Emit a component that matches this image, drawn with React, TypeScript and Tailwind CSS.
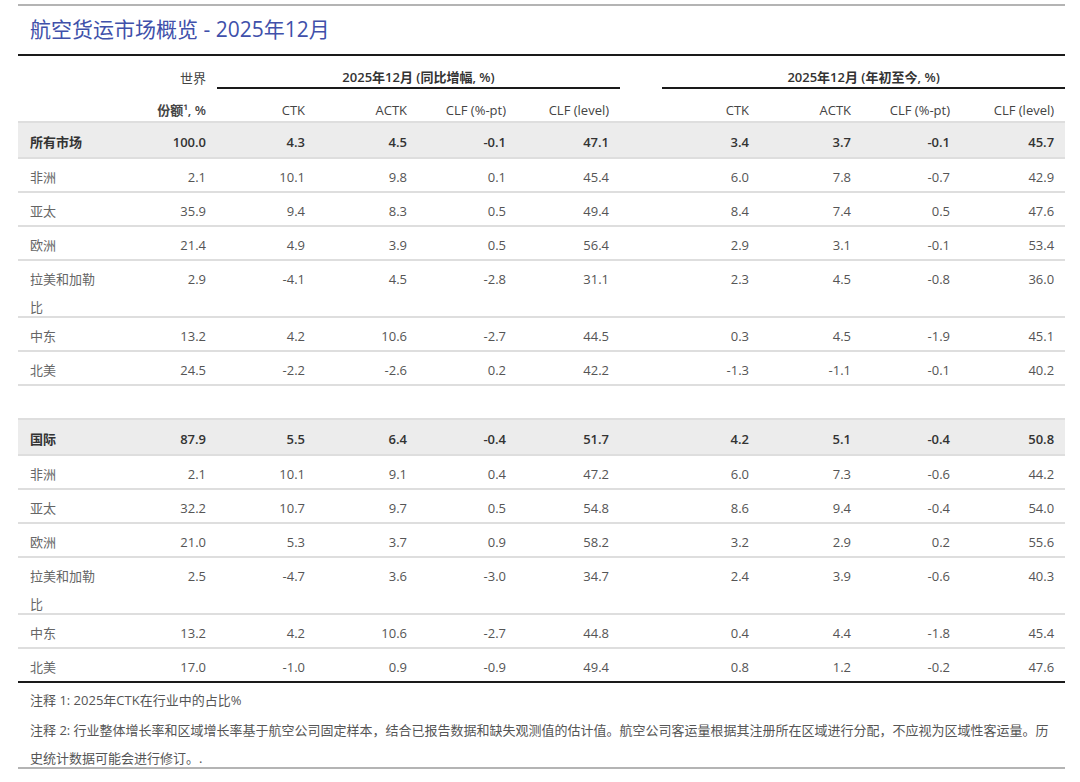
import React from "react";

type Row = {
  label: string;
  share: string;
  ytd: string[];
  cum: string[];
  bold?: boolean;
  tall?: boolean;
  last?: boolean;
};

const allMarkets: Row[] = [
  { label: "所有市场", share: "100.0", ytd: ["4.3", "4.5", "-0.1", "47.1"], cum: ["3.4", "3.7", "-0.1", "45.7"], bold: true },
  { label: "非洲", share: "2.1", ytd: ["10.1", "9.8", "0.1", "45.4"], cum: ["6.0", "7.8", "-0.7", "42.9"] },
  { label: "亚太", share: "35.9", ytd: ["9.4", "8.3", "0.5", "49.4"], cum: ["8.4", "7.4", "0.5", "47.6"] },
  { label: "欧洲", share: "21.4", ytd: ["4.9", "3.9", "0.5", "56.4"], cum: ["2.9", "3.1", "-0.1", "53.4"] },
  { label: "拉美和加勒比", share: "2.9", ytd: ["-4.1", "4.5", "-2.8", "31.1"], cum: ["2.3", "4.5", "-0.8", "36.0"], tall: true },
  { label: "中东", share: "13.2", ytd: ["4.2", "10.6", "-2.7", "44.5"], cum: ["0.3", "4.5", "-1.9", "45.1"] },
  { label: "北美", share: "24.5", ytd: ["-2.2", "-2.6", "0.2", "42.2"], cum: ["-1.3", "-1.1", "-0.1", "40.2"] },
];

const international: Row[] = [
  { label: "国际", share: "87.9", ytd: ["5.5", "6.4", "-0.4", "51.7"], cum: ["4.2", "5.1", "-0.4", "50.8"], bold: true },
  { label: "非洲", share: "2.1", ytd: ["10.1", "9.1", "0.4", "47.2"], cum: ["6.0", "7.3", "-0.6", "44.2"] },
  { label: "亚太", share: "32.2", ytd: ["10.7", "9.7", "0.5", "54.8"], cum: ["8.6", "9.4", "-0.4", "54.0"] },
  { label: "欧洲", share: "21.0", ytd: ["5.3", "3.7", "0.9", "58.2"], cum: ["3.2", "2.9", "0.2", "55.6"] },
  { label: "拉美和加勒比", share: "2.5", ytd: ["-4.7", "3.6", "-3.0", "34.7"], cum: ["2.4", "3.9", "-0.6", "40.3"], tall: true },
  { label: "中东", share: "13.2", ytd: ["4.2", "10.6", "-2.7", "44.8"], cum: ["0.4", "4.4", "-1.8", "45.4"] },
  { label: "北美", share: "17.0", ytd: ["-1.0", "0.9", "-0.9", "49.4"], cum: ["0.8", "1.2", "-0.2", "47.6"], last: true },
];

function DataRow({ row }: { row: Row }) {
  const base = row.last ? "" : "border-b-2 border-[#dedede]";
  const bg = row.bold ? "bg-[#ececec]" : "";
  const pad = row.bold ? "pt-[5px] pb-px" : "pt-[4px]";
  const tone = row.bold ? "font-semibold text-[#333]" : "text-[#555]";
  const cell = `${base} ${bg} ${pad} align-top leading-[28px]`;
  const num = `${cell} ${tone} text-right pr-[11px]`;
  return (
    <tr>
      <td className={`${cell} pl-[12px] ${row.bold ? "font-semibold text-[#333]" : "text-[#666]"}`}>
        <div className={row.tall ? "h-[51px]" : row.last ? "h-[28px]" : ""}>{row.label}</div>
      </td>
      <td className={num}>{row.share}</td>
      {row.ytd.map((v, i) => (
        <td key={"y" + i} className={num}>{v}</td>
      ))}
      <td className={cell}></td>
      {row.cum.map((v, i) => (
        <td key={"c" + i} className={num}>{v}</td>
      ))}
    </tr>
  );
}

const subHeads = ["CTK", "ACTK", "CLF (%-pt)", "CLF (level)"];

export default function App() {
  return (
    <div className="min-h-[782px] w-[1080px] bg-white pt-[4px] font-['Open_Sans','Noto_Sans_CJK_SC',sans-serif] text-[13px]">
      <div className="ml-[18px] w-[1047px]">
        <div className="h-[2px] bg-[#b4b4b4]" />
        <div className="flex h-[48px] items-center pl-[12px] text-[21px] text-[#4050aa]">
          航空货运市场概览 - 2025年12月
        </div>
        <div className="h-[2px] bg-[#1a1a1a]" />

        <table className="w-full table-fixed border-separate border-spacing-0">
          <colgroup>
            <col className="w-[87px]" />
            <col className="w-[112px]" />
            <col className="w-[99px]" />
            <col className="w-[102px]" />
            <col className="w-[99px]" />
            <col className="w-[103px]" />
            <col className="w-[42px]" />
            <col className="w-[98px]" />
            <col className="w-[102px]" />
            <col className="w-[99px]" />
            <col className="w-[104px]" />
          </colgroup>
          <thead>
            <tr>
              <th className="h-[33px]"></th>
              <th className="h-[33px] align-bottom pb-px pr-[11px] text-right font-normal leading-[20px] text-[#444]">世界</th>
              <th colSpan={4} className="h-[33px] align-bottom border-b-2 border-[#1a1a1a] text-center font-semibold leading-[20px] text-[#333]">
                2025年12月 (同比增幅, %)
              </th>
              <th></th>
              <th colSpan={4} className="h-[33px] align-bottom border-b-2 border-[#1a1a1a] text-center font-semibold leading-[20px] text-[#333]">
                2025年12月 (年初至今, %)
              </th>
            </tr>
            <tr>
              <th className="h-[34px] border-b-2 border-[#dedede]"></th>
              <th className="h-[34px] align-bottom border-b-2 border-[#dedede] pb-px pr-[11px] text-right font-semibold leading-[20px] text-[#444]">
                份额¹, %
              </th>
              {subHeads.map((h) => (
                <th key={"a" + h} className="h-[34px] align-bottom border-b-2 border-[#dedede] pb-px pr-[11px] text-right font-normal leading-[20px] text-[#444]">
                  {h}
                </th>
              ))}
              <th className="h-[34px] border-b-2 border-[#dedede]"></th>
              {subHeads.map((h) => (
                <th key={"b" + h} className="h-[34px] align-bottom border-b-2 border-[#dedede] pb-px pr-[11px] text-right font-normal leading-[20px] text-[#444]">
                  {h}
                </th>
              ))}
            </tr>
          </thead>
          <tbody>
            {allMarkets.map((r, i) => (
              <DataRow key={"m" + i} row={r} />
            ))}
            <tr>
              <td colSpan={11} className="h-[34px] border-b-2 border-[#dedede]"></td>
            </tr>
            {international.map((r, i) => (
              <DataRow key={"n" + i} row={r} />
            ))}
          </tbody>
        </table>

        <div className="h-[2px] bg-[#1a1a1a]" />
        <div className="pl-[12px] pr-[8px] text-[13px] text-[#555]">
          <div className="pt-[3px] leading-[28px]">注释 1: 2025年CTK在行业中的占比%</div>
          <div className="mt-[2px] h-[51px] leading-[28px]">
            注释 2: 行业整体增长率和区域增长率基于航空公司固定样本，结合已报告数据和缺失观测值的估计值。航空公司客运量根据其注册所在区域进行分配，不应视为区域性客运量。历史统计数据可能会进行修订。.
          </div>
        </div>
        <div className="h-[2px] bg-[#b4b4b4]" />
      </div>
    </div>
  );
}
